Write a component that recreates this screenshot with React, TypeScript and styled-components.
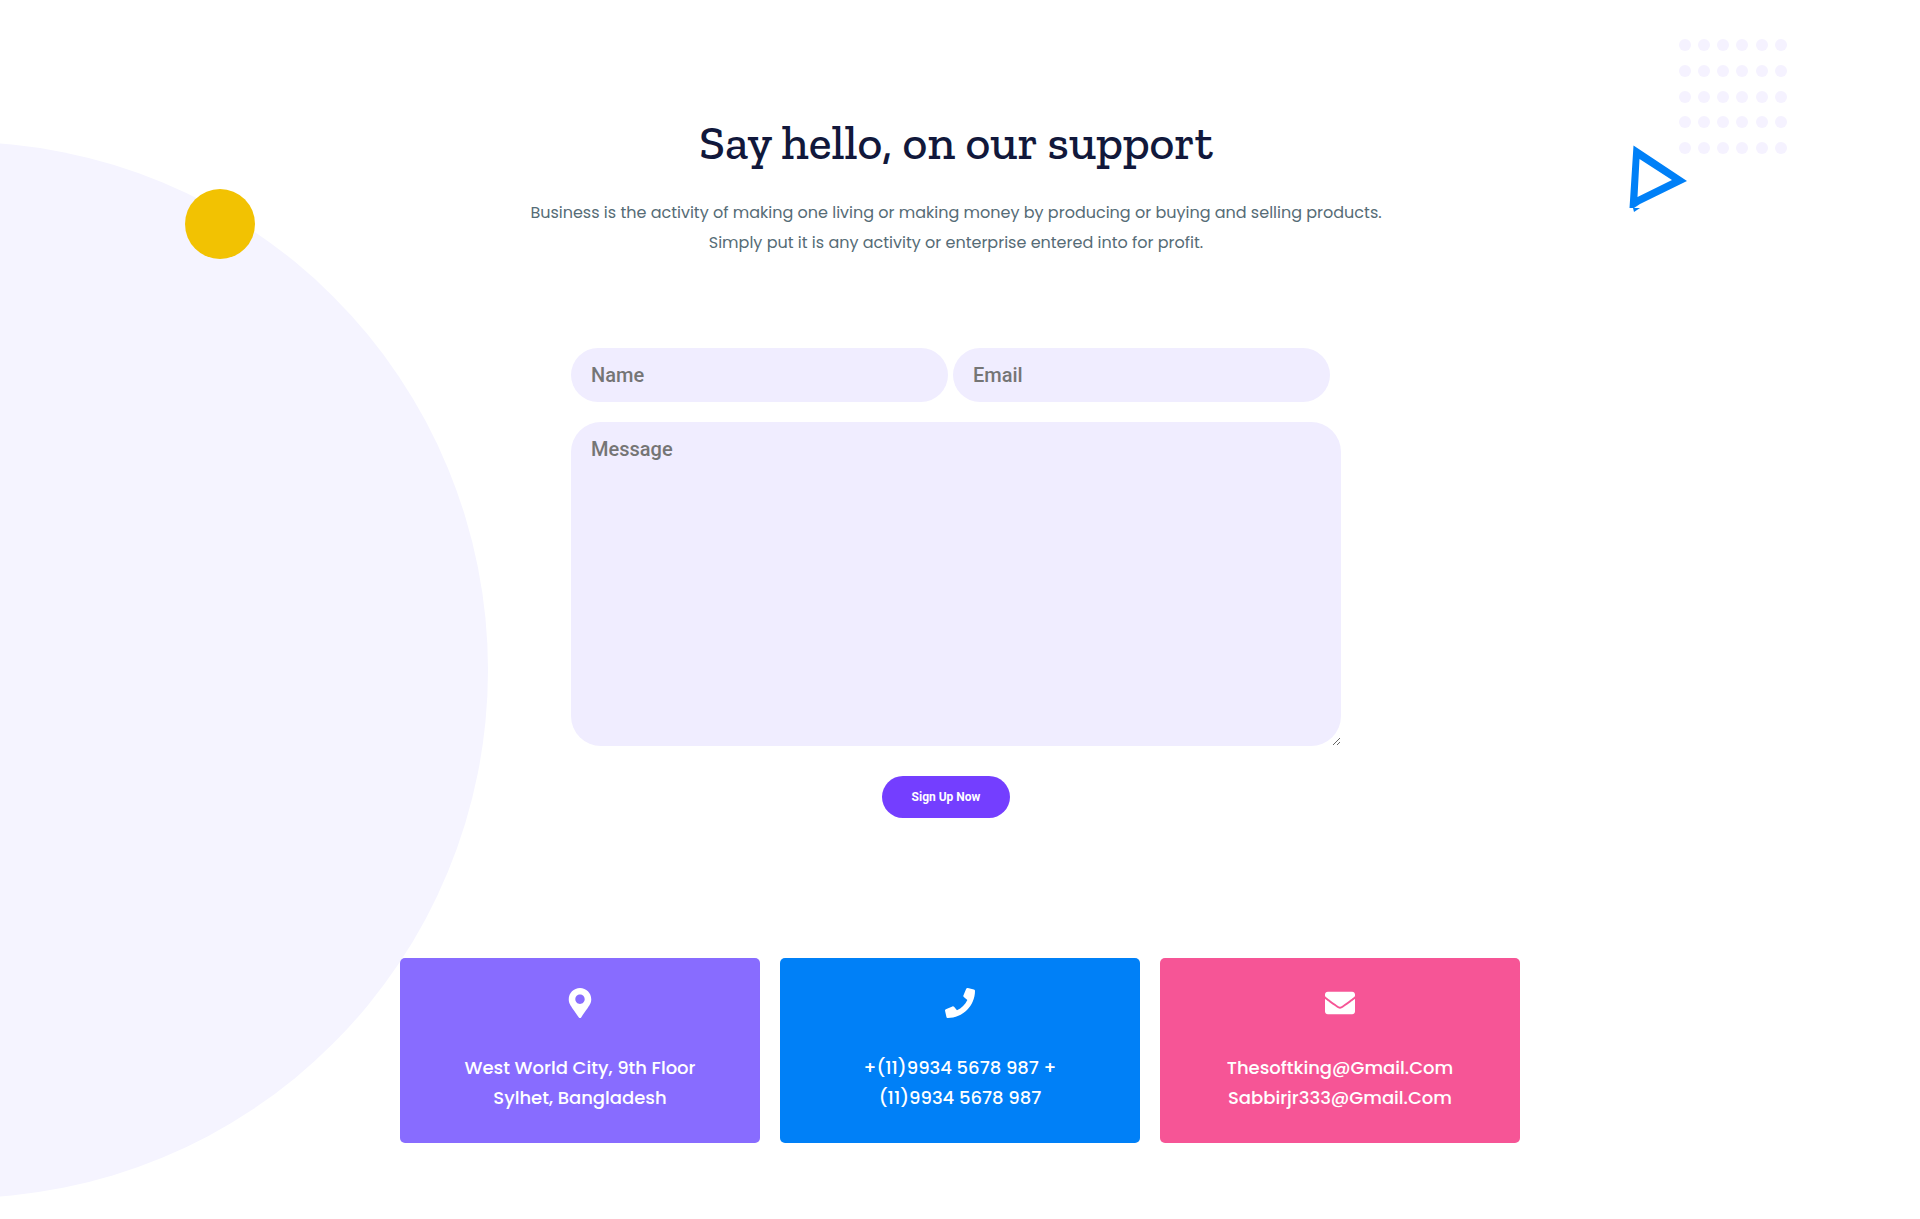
import React from "react";
import styled, { createGlobalStyle } from "styled-components";
import { FaEnvelope, FaMapMarkerAlt, FaPhone } from "react-icons/fa";

const bodyFont = '"Poppins", "Inter", sans-serif';
const formFont = '"Roboto", sans-serif';

const GlobalStyle = createGlobalStyle`
  *, *::before, *::after { box-sizing: border-box; }
  body { margin: 0; background: #fff; font-family: ${bodyFont}; }
`;

const Page = styled.div`
  position: relative;
  overflow: hidden;
  padding: 113px 0 76px;
`;

const BigCircle = styled.div`
  position: absolute;
  top: 142px;
  left: -568px;
  width: 1056px;
  height: 1056px;
  border-radius: 50%;
  background: #f5f4ff;
`;

const YellowCircle = styled.div`
  position: absolute;
  top: 189px;
  left: 185px;
  width: 70px;
  height: 70px;
  border-radius: 50%;
  background: #f2c202;
`;

const CornerArt = styled.svg`
  position: absolute;
  top: 30px;
  right: 120px;
  width: 180px;
  height: 190px;
`;

const Contact = styled.section`
  position: relative;
  padding: 0 28px 0 20px;
  display: flex;
  flex-direction: column;
  align-items: center;
`;

const Title = styled.h1`
  margin: 0;
  font: 500 48px/60px "Zilla Slab", "Liberation Serif", serif;
  color: #11183b;
  text-align: center;
`;

const Intro = styled.p`
  margin: 25px 0 0;
  max-width: 900px;
  font-size: 16px;
  line-height: 30px;
  color: #566c76;
  text-align: center;
`;

const Form = styled.form`
  width: 100%;
  max-width: 770px;
  margin-top: 90px;
  display: flex;
  flex-direction: column;
  gap: 20px;
`;

const FieldRow = styled.div`
  display: grid;
  grid-template-columns: 1fr 1fr;
  gap: 5px;
  padding-right: 11px;
`;

const Input = styled.input`
  width: 100%;
  height: 54px;
  padding: 0 20px;
  border: 0;
  border-radius: 30px;
  background: #f0edff;
  font: 500 20px/24px ${formFont};
  color: #333;
  &::placeholder { color: #757575; }
`;

const Message = styled.textarea`
  display: block;
  width: 100%;
  height: 324px;
  padding: 15px 20px;
  border: 0;
  border-radius: 30px;
  background: #f0edff;
  font: 500 20px/24px ${formFont};
  color: #333;
  &::placeholder { color: #757575; }
`;

const Actions = styled.div`
  display: flex;
  justify-content: center;
  padding: 10px 20px 0 0;
`;

const SubmitButton = styled.button`
  height: 42px;
  padding: 0 30px;
  border: 0;
  border-radius: 30px;
  background: #743eff;
  font: 700 12px/14px ${formFont};
  color: #fff;
  cursor: pointer;
`;

const Cards = styled.section`
  position: relative;
  max-width: 1120px;
  margin: 140px auto 0;
  display: grid;
  grid-template-columns: repeat(3, 1fr);
  gap: 20px;
`;

const Card = styled.article<{ $color: string }>`
  display: flex;
  flex-direction: column;
  align-items: center;
  gap: 35px;
  padding: 30px 20px;
  border-radius: 5px;
  background: ${(p) => p.$color};
  color: #fff;
  svg { width: 30px; height: 30px; }
`;

const CardText = styled.p`
  margin: 0;
  font-weight: 500;
  font-size: 18px;
  line-height: 30px;
  text-align: center;
`;

const cards = [
  { color: "#886cff", icon: <FaMapMarkerAlt />, lines: ["West World City, 9th Floor", "Sylhet, Bangladesh"] },
  { color: "#0080f7", icon: <FaPhone />, lines: ["+(11)9934 5678 987 +", "(11)9934 5678 987"] },
  { color: "#f65596", icon: <FaEnvelope />, lines: ["Thesoftking@Gmail.Com", "Sabbirjr333@Gmail.Com"] },
];

const dotColumns = [65, 84, 103, 122, 142, 161];
const dotRows = [15, 41, 67, 92, 118];

export default function App() {
  return (
    <Page>
      <GlobalStyle />
      <BigCircle />
      <YellowCircle />
      <CornerArt viewBox="0 0 180 190" aria-hidden="true">
        {dotRows.map((y) =>
          dotColumns.map((x) => <circle key={`${x}-${y}`} cx={x} cy={y} r="6" fill="#f5f2ff" />)
        )}
        <path fill="#0080f7" fillRule="evenodd" d="M13.500 115.500 67 151 20 174 14 178H9.500ZM19.500 129 17.500 167 52 150Z" />
        <path fill="#0080f7" d="M13 178H20L14 182Z" />
      </CornerArt>
      <Contact>
        <Title>Say hello, on our support</Title>
        <Intro>
          Business is the activity of making one living or making money by producing or buying and selling products.
          <br />
          Simply put it is any activity or enterprise entered into for profit.
        </Intro>
        <Form onSubmit={(e) => e.preventDefault()}>
          <FieldRow>
            <Input type="text" placeholder="Name" aria-label="Name" />
            <Input type="email" placeholder="Email" aria-label="Email" />
          </FieldRow>
          <Message placeholder="Message" aria-label="Message" />
          <Actions>
            <SubmitButton type="submit">Sign Up Now</SubmitButton>
          </Actions>
        </Form>
      </Contact>
      <Cards>
        {cards.map((card) => (
          <Card key={card.color} $color={card.color}>
            {card.icon}
            <CardText>
              {card.lines[0]}
              <br />
              {card.lines[1]}
            </CardText>
          </Card>
        ))}
      </Cards>
    </Page>
  );
}
